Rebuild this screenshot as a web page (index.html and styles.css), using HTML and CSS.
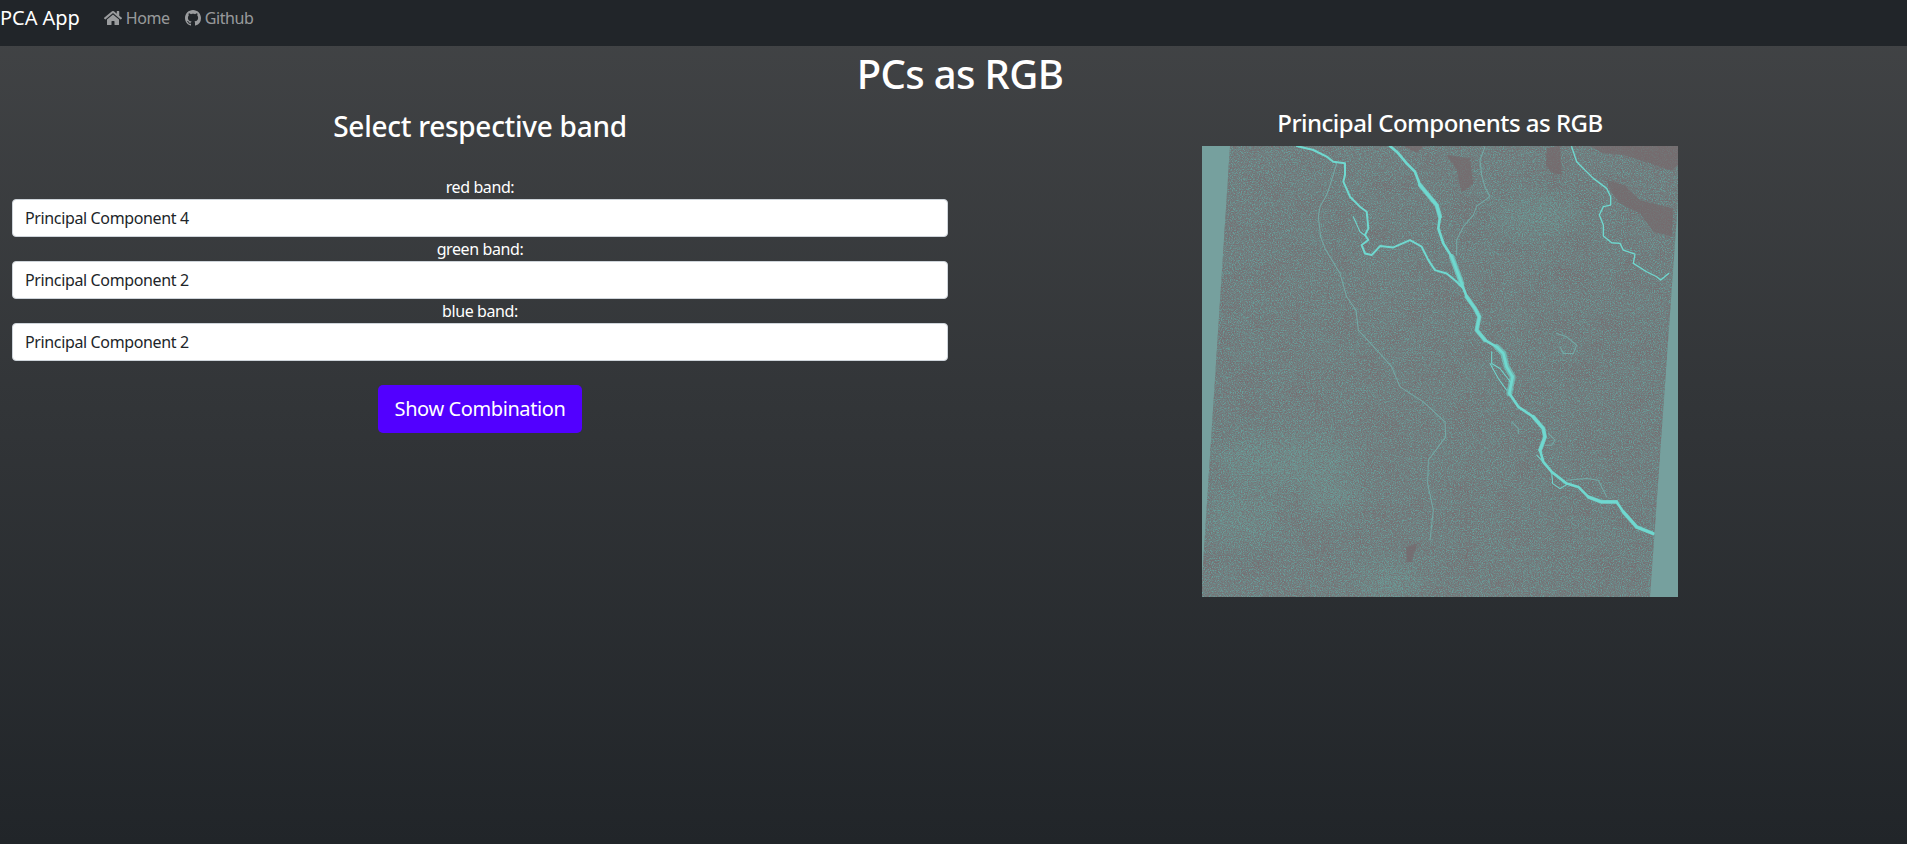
FILE: index.html
```html
<!DOCTYPE html>
<html lang="en">
<head>
<meta charset="utf-8">
<title>PCs as RGB</title>
<link rel="stylesheet" href="styles.css">
</head>
<body>
<div class="page">
  <nav class="navbar">
    <a class="brand" href="#">PCA App</a>
    <a class="nav-link" href="#">
      <svg class="icon-home" viewBox="0 0 576 512"><path fill="currentColor" d="M280.37 148.26L96 300.11V464a16 16 0 0 0 16 16l112.06-.29a16 16 0 0 0 15.92-16V368a16 16 0 0 1 16-16h64a16 16 0 0 1 16 16v95.64a16 16 0 0 0 16 16.05L464 480a16 16 0 0 0 16-16V300L295.67 148.26a12.19 12.19 0 0 0-15.3 0zM571.6 251.47L488 182.56V44.05a12 12 0 0 0-12-12h-56a12 12 0 0 0-12 12v72.61L318.47 43a48 48 0 0 0-61 0L4.34 251.47a12 12 0 0 0-1.6 16.9l25.5 31A12 12 0 0 0 45.15 301l235.22-193.74a12.19 12.19 0 0 1 15.3 0L530.9 301a12 12 0 0 0 16.9-1.6l25.5-31a12 12 0 0 0-1.7-16.93z"/></svg>
      Home
    </a>
    <a class="nav-link" href="#">
      <svg class="icon-gh" viewBox="0 0 16 16"><path fill="currentColor" d="M8 0C3.58 0 0 3.58 0 8c0 3.54 2.29 6.53 5.47 7.59.4.07.55-.17.55-.38 0-.19-.01-.82-.01-1.49-2.01.37-2.53-.49-2.69-.94-.09-.23-.48-.94-.82-1.13-.28-.15-.68-.52-.01-.53.63-.01 1.08.58 1.23.82.72 1.21 1.87.87 2.33.66.07-.52.28-.87.51-1.07-1.78-.2-3.64-.89-3.64-3.95 0-.87.31-1.59.82-2.15-.08-.2-.36-1.02.08-2.12 0 0 .67-.21 2.2.82.64-.18 1.32-.27 2-.27.68 0 1.36.09 2 .27 1.53-1.04 2.2-.82 2.2-.82.44 1.1.16 1.92.08 2.12.51.56.82 1.27.82 2.15 0 3.07-1.87 3.75-3.65 3.95.29.25.54.73.54 1.48 0 1.07-.01 1.93-.01 2.2 0 .21.15.46.55.38A8.013 8.013 0 0016 8c0-4.42-3.58-8-8-8z"/></svg>
      Github
    </a>
  </nav>

  <main class="content">
    <h1 class="title">PCs as RGB</h1>
    <div class="row">
      <section class="col">
        <h3 class="form-title">Select respective band</h3>
        <form class="band-form">
          <label class="band-label">red band:</label>
          <select class="band-select"><option>Principal Component 4</option></select>
          <label class="band-label">green band:</label>
          <select class="band-select"><option>Principal Component 2</option></select>
          <label class="band-label">blue band:</label>
          <select class="band-select"><option>Principal Component 2</option></select>
          <button class="show-btn" type="button">Show Combination</button>
        </form>
      </section>
      <section class="col col-image">
        <h4 class="image-title">Principal Components as RGB</h4>
        <svg class="pc-map" viewBox="36 138 1428 1352" preserveAspectRatio="none" role="img" aria-label="Principal components composite">
          <defs>
            <filter id="grain" x="0" y="0" width="100%" height="100%" color-interpolation-filters="sRGB">
              <feTurbulence type="fractalNoise" baseFrequency="0.3" numOctaves="2" seed="7"/>
              <feColorMatrix values="0 0 0 0 0.40  0 0 0 0 0.66  0 0 0 0 0.64  4 0 0 0 -1.8"/>
            </filter>
            <filter id="grain2" x="0" y="0" width="100%" height="100%" color-interpolation-filters="sRGB">
              <feTurbulence type="fractalNoise" baseFrequency="0.28" numOctaves="2" seed="23"/>
              <feColorMatrix values="0 0 0 0 0.49  0 0 0 0 0.39  0 0 0 0 0.41  4 0 0 0 -1.8"/>
            </filter>
            <filter id="patch" x="0" y="0" width="100%" height="100%" color-interpolation-filters="sRGB">
              <feTurbulence type="fractalNoise" baseFrequency="0.014" numOctaves="5" seed="11"/>
              <feColorMatrix values="0 0 0 0 0.46  0 0 0 0 0.45  0 0 0 0 0.46  3 0 0 0 -1.4"/>
            </filter>
            <filter id="soft" color-interpolation-filters="sRGB"><feGaussianBlur stdDeviation="30"/></filter>
            <clipPath id="scene"><polygon points="120,138 1464,138 1464,300 1380,1490 36,1490 36,1440"/></clipPath>
          </defs>
          <rect x="36" y="138" width="1428" height="1352" fill="#76a09e"/>
          <g clip-path="url(#scene)">
            <rect x="36" y="138" width="1428" height="1352" fill="#717f80"/>
            <rect x="36" y="138" width="1428" height="1352" filter="url(#patch)" opacity=".55"/>
            <g fill="#6f9692" filter="url(#soft)" opacity=".55">
              <ellipse cx="280" cy="1080" rx="210" ry="80"/>
              <ellipse cx="600" cy="1440" rx="100" ry="50"/>
              <ellipse cx="160" cy="1250" rx="110" ry="80"/>
              <ellipse cx="1040" cy="350" rx="130" ry="60"/>
              <ellipse cx="420" cy="1180" rx="90" ry="60"/>
            </g>
            <rect x="36" y="138" width="1428" height="1352" filter="url(#grain)" opacity=".8"/>
            <rect x="36" y="138" width="1428" height="1352" filter="url(#grain2)" opacity=".6"/>
            <g fill="#766a6d" opacity=".75">
              <path d="M1200 138H1464V195L1446 212 1380 190 1300 165 1240 160Z"/>
              <path d="M1070 145 1110 138 1115 225 1085 218 1068 195Z"/>
              <path d="M1250 240 1300 255 1350 300 1450 325 1445 410 1390 395 1350 340 1290 310 1260 270Z"/>
              <path d="M770 165 840 175 850 250 815 278 800 210Z"/>
              <path d="M640 138H700L680 160Z"/>
              <path d="M648 1340 680 1330 665 1385 650 1385Z"/>
            </g>
            <g fill="none" stroke-linecap="round" stroke-linejoin="round">
              <g stroke="#74aaa7" stroke-width="3">
                <polyline points="440,190 425,240 410,285 390,320 385,350 392,410 405,445 450,520 470,590 498,630 505,690 570,760 605,800 630,860 700,905 765,965 767,1010 715,1080 713,1150 730,1230 720,1320"/>
                <polyline points="885,140 870,180 875,225 885,260 900,290 860,318 850,345 820,380 800,420 800,465"/>
                <polyline points="1130,1140 1190,1135 1225,1140 1250,1190"/>
                <polyline points="1075,1000 1095,1020 1085,1035 1065,1035"/>
                <polyline points="965,965 985,985 985,1000"/>
                <polyline points="1100,700 1130,710 1160,735 1150,760 1120,760 1110,740"/>
              </g>
              <g stroke="#6fd8cf">
                <polyline stroke-width="8" points="600,138 625,160 650,190 675,215 690,255 715,285 740,315 750,350 745,385 760,430 785,470 800,510 815,550 830,590 855,625 868,650 860,690 885,720 920,740 940,760 950,800 968,830 958,880 985,920 1030,950 1060,985 1065,1010 1050,1050 1060,1085 1085,1115 1130,1150 1165,1160 1195,1190 1235,1205 1280,1205 1300,1235 1340,1280 1390,1300"/>
                <polyline stroke-width="13" opacity=".8" points="690,255 715,285 740,315 750,350"/>
                <polyline stroke-width="16" opacity=".7" points="785,470 800,510 815,550"/>
                <polyline stroke-width="13" opacity=".75" points="830,590 855,625 868,650 860,690 885,720"/>
                <polyline stroke-width="18" opacity=".6" points="920,740 940,760 950,800 968,830 958,880"/>
                <polyline stroke-width="12" opacity=".8" points="1030,950 1060,985 1065,1010 1050,1050"/>
                <polyline stroke-width="11" opacity=".8" points="1195,1190 1235,1205 1280,1205"/>
                <polyline stroke-width="11" opacity=".8" points="1300,1235 1340,1280 1390,1300"/>
                <polyline stroke-width="6" points="320,138 370,150 410,170 430,185 465,190 465,225 460,245 480,290 510,320 530,335 535,385 525,405 535,420 515,435 525,460 545,465 570,438 610,442 660,420 695,440 715,480 735,510 770,520 800,545 820,565"/>
                <polyline stroke-width="4" points="1145,140 1160,185 1210,235 1250,265 1262,290 1262,315 1240,320 1228,345 1240,375 1240,408 1265,428 1290,430 1300,450 1335,462 1330,490 1370,515 1400,530 1412,540 1436,520"/>
                <polyline stroke-width="3" points="490,350 510,395 530,410"/>
                <polyline stroke-width="3" points="905,755 905,790 930,805 965,850"/>
                <polyline stroke-width="3" points="900,790 925,835 950,870"/>
                <polyline stroke-width="3" points="1085,1115 1088,1150 1110,1165 1135,1150"/>
                <polyline stroke-width="3" points="1040,1065 1060,1085"/>
              </g>
            </g>
          </g>
        </svg>
      </section>
    </div>
  </main>
</div>
</body>
</html>
```

FILE: styles.css
```css
* {
  box-sizing: border-box;
}

html,
body {
  margin: 0;
  height: 100%;
  overflow: hidden;
}

body {
  font-family: "Noto Sans", "Open Sans", sans-serif;
  font-size: 16px;
  line-height: 24px;
  color: #fff;
  background: #272a2d;
}

.page {
  width: 1920px;
  height: 844px;
  background: linear-gradient(180deg, #424446 0%, #212529 100%);
}

.navbar {
  display: flex;
  align-items: center;
  height: 46px;
  padding-bottom: 10px;
  background: #212529;
}

.brand {
  margin-right: 16px;
  font-size: 20px;
  line-height: 30px;
  color: #fff;
  text-decoration: none;
  letter-spacing: -0.05px;
}

.nav-link {
  display: flex;
  align-items: center;
  gap: 4px;
  padding: 0 8px;
  color: rgba(255, 255, 255, 0.55);
  text-decoration: none;
  letter-spacing: -0.4px;
}

.nav-link + .nav-link {
  margin-left: -1px;
}

.icon-home {
  width: 18px;
  height: 16px;
}

.icon-gh {
  width: 16px;
  height: 16px;
}

.title {
  margin: 0;
  height: 64px;
  padding-top: 2px;
  font-size: 40px;
  line-height: 52px;
  font-weight: 500;
  text-align: center;
  letter-spacing: -0.65px;
}

.row {
  display: flex;
}

.col {
  width: 960px;
  padding: 0 12px;
  text-align: center;
}

.form-title {
  margin: 0 0 25px;
  height: 40px;
  padding-bottom: 2px;
  font-size: 28px;
  line-height: 32px;
  font-weight: 500;
  letter-spacing: -0.28px;
}

.band-form {
  display: flex;
  flex-direction: column;
  align-items: center;
}

.band-label {
  display: block;
  height: 24px;
  letter-spacing: -0.4px;
}

.band-select {
  display: block;
  width: 100%;
  height: 38px;
  padding: 0 12px;
  border: 1px solid #ced4da;
  border-radius: 4px;
  background: #fff;
  color: #212529;
  font: inherit;
  letter-spacing: -0.36px;
  appearance: none;
}

.show-btn {
  width: 204px;
  height: 48px;
  margin-top: 24px;
  border: 0;
  border-radius: 5px;
  background: #5200ff;
  color: #fff;
  font: inherit;
  font-size: 20px;
  letter-spacing: -0.4px;
}

.col-image {
  display: flex;
  flex-direction: column;
  align-items: center;
}

.image-title {
  margin: 0;
  height: 36px;
  padding-bottom: 6px;
  font-size: 24px;
  line-height: 26px;
  font-weight: 500;
  letter-spacing: -0.5px;
}

.pc-map {
  display: block;
  width: 476px;
  height: 451px;
}
```
